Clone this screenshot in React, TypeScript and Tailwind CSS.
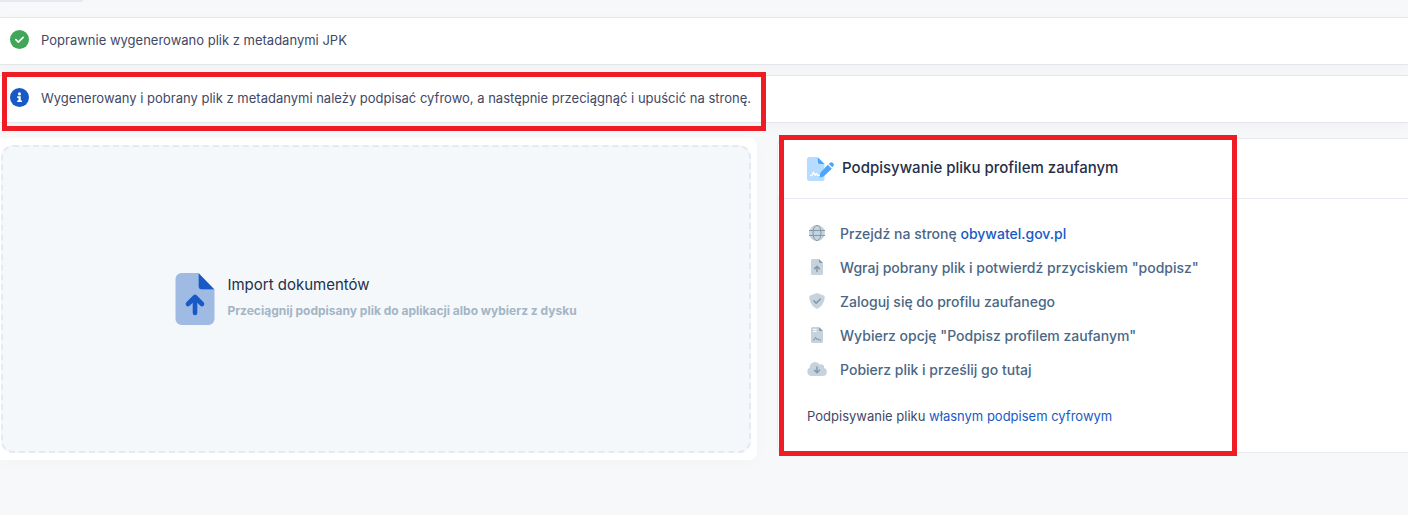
import React from "react";

type IconProps = { className?: string };

function SuccessIcon({ className }: IconProps) {
  return (
    <svg viewBox="0 0 20 20" className={className} aria-hidden="true">
      <circle cx="10" cy="10" r="10" fill="#40a759" />
      <path d="M6.2 10.2l2.6 2.5 5-5" fill="none" stroke="#fff" strokeWidth="1.8" strokeLinecap="round" strokeLinejoin="round" />
    </svg>
  );
}

function InfoIcon({ className }: IconProps) {
  return (
    <svg viewBox="0 0 20 20" className={className} aria-hidden="true">
      <circle cx="10" cy="10" r="10" fill="#185ac5" />
      <circle cx="10" cy="6.2" r="1.6" fill="#fff" />
      <path d="M7.6 8.7h3.7v4.4h1.3v1.7H7.6v-1.7h1.3v-2.7H7.6z" fill="#fff" />
    </svg>
  );
}

function ImportIcon({ className }: IconProps) {
  return (
    <svg viewBox="0 0 39 52" className={className} aria-hidden="true">
      <path d="M6 0h17v13a3.5 3.5 0 0 0 3.500 3.500H39V46a6 6 0 0 1-6 6H6a6 6 0 0 1-6-6V6a6 6 0 0 1 6-6z" fill="#9fbae3" />
      <path d="M23 0l16 16.500H26.500A3.500 3.500 0 0 1 23 13z" fill="#185ac5" />
      <path d="M19.500 40V24.500M12.500 31l7-7 7 7" fill="none" stroke="#185ac5" strokeWidth="4.600" strokeLinecap="round" strokeLinejoin="round" />
    </svg>
  );
}

function SignFileIcon({ className }: IconProps) {
  return (
    <svg viewBox="0 0 27 24" className={className} aria-hidden="true">
      <path d="M2.500 0H10v6.500h7.500V22a2 2 0 0 1-2 2h-13A2.500 2.500 0 0 1 0 21.500v-19A2.500 2.500 0 0 1 2.500 0z" fill="#b6dcff" />
      <path d="M10.500 0l7 7h-5a2 2 0 0 1-2-2z" fill="#4ba6fb" />
      <path d="M3.500 18.500h1.300l1.700-3.300 1.500 3 1.500-1.700 1.200 1.800h2.300" fill="none" stroke="#fff" strokeWidth="1.300" strokeLinecap="round" strokeLinejoin="round" />
      <path d="M20.800 7.800l4 4-8.200 7.600-4 1.100.8-4.700z" fill="#4ba6fb" />
      <path d="M21.800 6.900l1-1a2.100 2.100 0 0 1 3 0l.4.400a2.100 2.100 0 0 1 0 3l-.9 1z" fill="#4ba6fb" />
    </svg>
  );
}

function GlobeIcon({ className }: IconProps) {
  return (
    <svg viewBox="0 0 20 16" className={className} aria-hidden="true">
      <circle cx="10" cy="8" r="8" fill="#c7d3dc" />
      <path d="M2 5.500h16M2 10.500h16" stroke="#8299a9" strokeWidth="1" />
      <ellipse cx="10" cy="8" rx="4" ry="7.600" fill="none" stroke="#8299a9" strokeWidth="1" />
    </svg>
  );
}

function UploadFileIcon({ className }: IconProps) {
  return (
    <svg viewBox="0 0 20 16" className={className} aria-hidden="true">
      <path d="M5.500 0H12v4h4v10.500a1.500 1.500 0 0 1-1.500 1.500h-9A1.500 1.500 0 0 1 4 14.500v-13A1.500 1.500 0 0 1 5.500 0z" fill="#c7d3dc" />
      <path d="M12 0l4 4h-3a1 1 0 0 1-1-1z" fill="#8299a9" />
      <path d="M10 12.500V7.500M7.700 9.600L10 7.300l2.300 2.300" fill="none" stroke="#8299a9" strokeWidth="1.500" strokeLinecap="round" strokeLinejoin="round" />
    </svg>
  );
}

function ShieldIcon({ className }: IconProps) {
  return (
    <svg viewBox="0 0 20 16" className={className} aria-hidden="true">
      <path d="M10 0l6.700 2.500c.6.200 1 .6 1 1.300C17.700 9.500 14.500 14 10 16 5.500 14 2.300 9.500 2.300 3.800c0-.7.400-1.100 1-1.300z" fill="#c7d3dc" />
      <path d="M6.800 7.800l2.400 2.300L13.400 6" fill="none" stroke="#8299a9" strokeWidth="1.500" strokeLinecap="round" strokeLinejoin="round" />
    </svg>
  );
}

function ContractIcon({ className }: IconProps) {
  return (
    <svg viewBox="0 0 20 16" className={className} aria-hidden="true">
      <path d="M5.500 0H12v4h4v10.500a1.500 1.500 0 0 1-1.500 1.500h-9A1.500 1.500 0 0 1 4 14.500v-13A1.500 1.500 0 0 1 5.500 0z" fill="#c7d3dc" />
      <path d="M12 0l4 4h-3a1 1 0 0 1-1-1z" fill="#8299a9" />
      <path d="M6 2.500h3.500M6 4.500h3.500" stroke="#fff" strokeWidth="1" />
      <path d="M6.200 13h1l1.300-3 1.300 2.700 1-1.200 1 1.500h2" fill="none" stroke="#8299a9" strokeWidth="1" strokeLinecap="round" strokeLinejoin="round" />
    </svg>
  );
}

function CloudIcon({ className }: IconProps) {
  return (
    <svg viewBox="0 0 20 16" className={className} aria-hidden="true">
      <path d="M17 7A3 3 0 0 0 12.600 3.600 5.300 5.300 0 0 0 2.800 6v.500A4.500 4.500 0 0 0 4.500 15H16a4.100 4.100 0 0 0 1-8z" fill="#c7d3dc" />
      <path d="M10 6v5.500M7.500 9.300l2.500 2.500 2.500-2.500" fill="none" stroke="#8299a9" strokeWidth="1.500" strokeLinecap="round" strokeLinejoin="round" />
    </svg>
  );
}

const steps = [
  {
    icon: GlobeIcon,
    text: (
      <>
        Przejdź na stronę{" "}
        <a href="#obywatel" className="text-[#185ac5]">obywatel.gov.pl</a>
      </>
    ),
  },
  { icon: UploadFileIcon, text: 'Wgraj pobrany plik i potwierdź przyciskiem "podpisz"' },
  { icon: ShieldIcon, text: "Zaloguj się do profilu zaufanego" },
  { icon: ContractIcon, text: 'Wybierz opcję "Podpisz profilem zaufanym"' },
  { icon: CloudIcon, text: "Pobierz plik i prześlij go tutaj" },
];

function Highlight({ className }: { className: string }) {
  return <div className={`pointer-events-none absolute border-5 border-[#ee1c24] ${className}`} />;
}

function Banner({ icon, children }: { icon: React.ReactNode; children: React.ReactNode }) {
  return (
    <div className="flex h-12 items-center gap-3 border-y border-[#e4e6e9] bg-white pl-2.5 text-[13px] text-[#3f4865] shadow-[0_4px_12px_rgba(0,0,0,0.03)]">
      {icon}
      <p>{children}</p>
    </div>
  );
}

export default function App() {
  return (
    <div className="min-h-screen bg-[#f6f8fa] font-['Inter',sans-serif]">
      <div className="h-0.5 w-[83px] rounded-br-sm bg-[#e4e9f0]" />

      {/* Messages */}
      <div className="flex flex-col gap-2.5 pt-[15px]">
        <Banner icon={<SuccessIcon className="mb-1 size-[19px]" />}>
          Poprawnie wygenerowano plik z metadanymi JPK
        </Banner>
        <div className="relative">
          <Banner icon={<InfoIcon className="mb-1 size-[19px]" />}>
            Wygenerowany i pobrany plik z metadanymi należy podpisać cyfrowo, a następnie przeciągnąć i upuścić na stronę.
          </Banner>
          <Highlight className="-top-[3px] -bottom-2 left-0.5 w-[764px]" />
        </div>
      </div>

      <div className="grid grid-cols-[6fr_5fr] items-start gap-5 pt-[15px]">
        {/* Drop zone */}
        <div className="rounded-r-lg bg-white py-[7px] pr-1.5 pl-px shadow-[0_4px_16px_rgba(0,0,0,0.02)]">
          <label className="flex h-[308px] cursor-pointer items-center justify-center gap-3 rounded-xl border-2 border-dashed border-[#e6e9f2] bg-[#f4f8fb]">
            <input type="file" className="sr-only" />
            <ImportIcon className="h-[52px] w-10" />
            <span className="flex flex-col gap-1.5 pb-0.5">
              <span className="text-[15px] leading-5 text-[#252f4a]">Import dokumentów</span>
              <span className="text-xs leading-5 font-bold text-[#a3b5c5]">
                Przeciągnij podpisany plik do aplikacji albo wybierz z dysku
              </span>
            </span>
          </label>
        </div>

        {/* Signing instructions */}
        <section className="relative rounded-l-lg border-y border-l border-[#e6e9f2] bg-white">
          <header className="flex h-15 items-center gap-2 border-b border-[#e6e9f2] pl-[29px]">
            <SignFileIcon className="h-6 w-[27px]" />
            <h2 className="text-[15px] font-medium text-[#252f4a]">Podpisywanie pliku profilem zaufanym</h2>
          </header>
          <div className="pt-[25px] pb-[26px] pl-[29px]">
            <ul className="flex flex-col gap-3.5">
              {steps.map(({ icon: Icon, text }, i) => (
                <li key={i} className="flex items-center gap-[13px] text-sm font-medium text-[#4a6785]">
                  <Icon className="mb-0.5 h-4 w-5" />
                  <span>{text}</span>
                </li>
              ))}
            </ul>
            <p className="pt-[26px] text-[13px] leading-5 text-[#3f4865]">
              Podpisywanie pliku{" "}
              <a href="#podpis" className="text-[#185ac5]">własnym podpisem cyfrowym</a>
            </p>
          </div>
          <Highlight className="-top-1 -bottom-1 left-px w-[458px]" />
        </section>
      </div>
    </div>
  );
}
